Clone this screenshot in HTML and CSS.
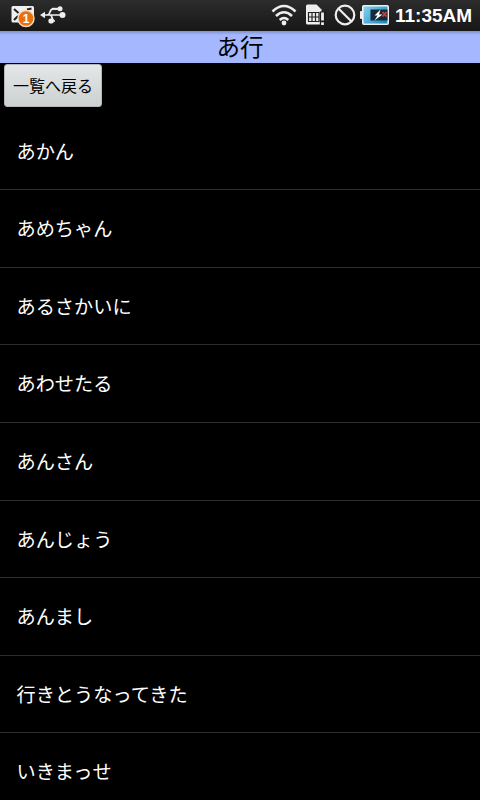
FILE: index.html
```html
<!DOCTYPE html>
<html lang="ja">
  <head>
    <meta charset="UTF-8" />
    <title>あ行</title>
    <link rel="stylesheet" href="styles.css">
  </head>
  <body>
    <div class="status-bar">
      <svg class="icon-mail" width="26" height="23" viewBox="0 0 26 23">
        <rect x="0.5" y="1" width="22.5" height="16.5" rx="1.5" fill="#f0f0f0" />
        <path d="M3 4 L7.5 8 M3 15 L7 11 M16 4.5 L20.5 3.5" fill="none" stroke="#222" stroke-width="2" />
        <circle cx="15" cy="13.5" r="8" fill="#e9700f" stroke="#f6d7bb" stroke-width="1.5" />
        <text x="15" y="18" text-anchor="middle" class="badge">1</text>
      </svg>
      <svg class="icon-usb" width="26" height="18" viewBox="0 0 26 18">
        <path d="M4 9 H22 M7 9 C11 9 9 2.8 13 2.8 H18 M10 9 C13 9 11 15 15 15" fill="none" stroke="#eee" stroke-width="1.7" />
        <path d="M0 9 L5 5.8 V12.2 Z" fill="#eee" />
        <circle cx="22.5" cy="9" r="3" fill="#eee" />
        <circle cx="20" cy="2.8" r="2.5" fill="#eee" />
        <path d="M12 2.8 H19" stroke="#eee" stroke-width="2" />
        <rect x="8.5" y="12.4" width="5.2" height="5.2" rx="1.8" fill="#eee" />
      </svg>
      <svg class="icon-wifi" width="26" height="22" viewBox="0 0 26 22">
        <path d="M1.5 7.5 Q13 -3.5 24.5 7.5 M5 12 Q13 4.5 21 12 M8.7 16 Q13 12 17.3 16" fill="none" stroke="#eee" stroke-width="2.6" />
        <circle cx="13" cy="19" r="2.4" fill="#eee" />
      </svg>
      <svg class="icon-sim" width="21" height="22" viewBox="0 0 21 22">
        <path d="M1 2 Q1 0.5 2.5 0.5 H11.5 L16.5 5.5 V20.5 H2.5 Q1 20.5 1 19 Z" fill="#eee" />
        <path d="M3.5 8.5 H14 V17.5 H3.5 Z M3.5 13 H14 M7 8.5 V17.5 M10.5 8.5 V17.5" fill="none" stroke="#222" stroke-width="1.2" />
        <path d="M14.8 7.5 H21 V22 H14.8 Z" fill="#1c1c1c" />
        <path d="M17.5 8.5 V16.5 M17.5 18.2 V21" stroke="#eee" stroke-width="2.8" />
      </svg>
      <svg class="icon-block" width="22" height="22" viewBox="0 0 22 22">
        <circle cx="11" cy="11" r="9.3" fill="none" stroke="#eee" stroke-width="2.2" />
        <path d="M4.5 4.5 L17.5 17.5" stroke="#eee" stroke-width="2.2" />
      </svg>
      <svg class="icon-battery" width="29" height="20" viewBox="0 0 29 20">
        <defs>
          <linearGradient id="charge" x2="1" y2="0.6">
            <stop offset="0" stop-color="#8bd4f2" />
            <stop offset="1" stop-color="#1b8fc4" />
          </linearGradient>
        </defs>
        <rect x="0" y="6" width="4" height="8" rx="1" fill="#eee" />
        <rect x="2.8" y="0.8" width="25.4" height="18.4" rx="1" fill="url(#charge)" stroke="#eee" stroke-width="1.6" />
        <rect x="10.5" y="4.5" width="17" height="11" fill="#172b38" />
        <path d="M20.5 4.5 L14.5 10.5 H17.5 L14.5 15.5 L22.5 9.5 H19 Z" fill="#fff" />
        <path d="M22.5 7 L26.5 11.5 M26.5 7 L22.5 11.5" stroke="#d9402b" stroke-width="1.7" />
      </svg>
      <span class="clock">11:35AM</span>
    </div>

    <h1>あ行</h1>

    <button class="back">一覧へ戻る</button>

    <ul class="words">
      <li>あかん</li>
      <li>あめちゃん</li>
      <li>あるさかいに</li>
      <li>あわせたる</li>
      <li>あんさん</li>
      <li>あんじょう</li>
      <li>あんまし</li>
      <li>行きとうなってきた</li>
      <li>いきまっせ</li>
    </ul>
  </body>
</html>
```
FILE: styles.css
```css
body {
  margin: 0;
  height: 800px;
  overflow: hidden;
  background-color: #000;
  color: #fff;
  font-family: "Noto Sans CJK JP", sans-serif;
}
.status-bar {
  display: flex;
  align-items: flex-start;
  box-sizing: border-box;
  height: 31px;
  padding-left: 11px;
  background: linear-gradient(#2c2c2c, #171717);
}
.status-bar svg {
  flex: none;
}
.icon-mail {
  margin-top: 5px;
}
.icon-usb {
  margin: 5.5px 0 0 3px;
}
.icon-wifi {
  margin: 4px 0 0 205px;
}
.icon-sim {
  margin: 4px 0 0 8px;
}
.icon-block {
  margin: 4px 0 0 7.5px;
}
.icon-battery {
  margin: 5px 0 0 4.5px;
}
.badge {
  font: bold 12px "Liberation Sans", sans-serif;
  fill: #fff;
}
.clock {
  margin-left: 6px;
  font: bold 19px/31px "Liberation Sans", sans-serif;
  white-space: nowrap;
}
h1 {
  height: 32px;
  margin: 0;
  background: linear-gradient(#8191c9, #a5b8ff 4px);
  color: #000;
  font-size: 23.5px;
  font-weight: 400;
  line-height: 30px;
  text-align: center;
}
.back {
  display: block;
  width: 98px;
  height: 43px;
  margin: 1px 0 0 4px;
  padding: 0 0 2px;
  border: 1px solid #b5b8b9;
  border-radius: 3px;
  background: linear-gradient(#e4e6e7, #cdd1d2);
  color: #000;
  font-family: inherit;
  font-size: 16px;
}
.words {
  margin: 5.7px 0 0;
  padding: 0;
  list-style: none;
}
.words li {
  box-sizing: border-box;
  height: 77.6px;
  padding-left: 16.5px;
  border-bottom: 1px solid #2d2d2d;
  font-size: 19.2px;
  line-height: 76px;
}
```
